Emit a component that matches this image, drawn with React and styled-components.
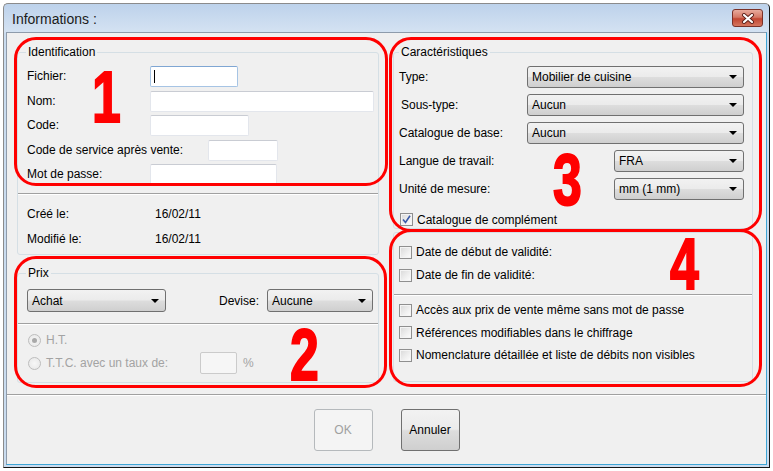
import React from 'react';
import styled, { createGlobalStyle } from 'styled-components';

const GlobalStyle = createGlobalStyle`
  html, body {
    margin: 0;
    padding: 0;
    background: #ffffff;
  }
  body {
    font-family: "Liberation Sans", Arial, sans-serif;
    font-size: 12px;
    color: #000;
  }
`;

const Window = styled.div`
  position: relative;
  box-sizing: border-box;
  width: 767px;
  height: 465px;
  margin: 3px 0 0 3px;
  padding: 0 2px 2px 2px;
  display: flex;
  flex-direction: column;
  border: 1px solid #8b8b8b;
  border-right-color: #151515;
  border-bottom-color: #151515;
  border-radius: 5px 5px 0 0;
  background: linear-gradient(180deg, #bdd2eb 0px, #d4e2f2 28px, #cadcef 29px, #cadcef 100%);
`;

const TitleBar = styled.div`
  height: 28px;
  display: flex;
  align-items: center;
  justify-content: space-between;
  padding: 0 4px 0 6px;
`;

const Title = styled.span`
  font-size: 14px;
  color: #1b1b1b;
  margin-top: 2px;
`;

const CloseButton = styled.div`
  box-sizing: border-box;
  width: 31px;
  height: 18px;
  border: 1px solid #7a3128;
  border-radius: 3px;
  display: flex;
  align-items: center;
  justify-content: center;
  background: linear-gradient(180deg, #e8ab9d 0%, #d57865 45%, #c24632 55%, #d5765f 100%);
`;

const Client = styled.div`
  flex: 1;
  box-sizing: border-box;
  display: flex;
  flex-direction: column;
  background: #f0f0f0;
  border: 1px solid #8e9bab;
  border-right-color: #3ea5d5;
  border-bottom-color: #3ea5d5;
`;

const Main = styled.div`
  display: flex;
  gap: 14px;
  padding: 12px 13px 0 10px;
  align-items: flex-start;
`;

const Column = styled.div`
  display: flex;
  flex-direction: column;
  width: ${p => p.$width}px;
`;

const Group = styled.fieldset`
  margin: ${p => p.$top || 0}px 0 0 0;
  padding: 0 0 ${p => p.$padBottom || 0}px 0;
  min-width: 0;
  border: 1px solid #d5dfe5;
  border-radius: 3px;
`;

const Legend = styled.legend`
  margin-left: ${p => p.$offset}px;
  padding: 0 2px;
  font-size: 12px;
  line-height: 14px;
`;

const Panel = styled.div`
  box-sizing: border-box;
  margin-top: 3px;
  height: 150px;
  padding-top: 7.5px;
  border: 1px solid #d5dfe5;
  border-radius: 3px;
`;

const FieldList = styled.div`
  margin-top: 7px;
  padding-left: 9px;
`;

const FieldRow = styled.div`
  display: flex;
  align-items: flex-start;
  height: 24.5px;
`;

const FieldLabel = styled.span`
  width: ${p => p.$width}px;
  line-height: 21px;
  white-space: nowrap;
`;

const TextBox = styled.div`
  position: relative;
  box-sizing: border-box;
  width: ${p => p.$width}px;
  height: 21px;
  background: #ffffff;
  border: 1px solid ${p => (p.$focused ? '#a6c4e4' : '#e3e6ec')};
  border-top-color: ${p => (p.$focused ? '#7fa6d3' : '#c9ccd3')};
  border-radius: 2px;
`;

const Caret = styled.span`
  position: absolute;
  left: 3px;
  top: 3px;
  width: 1px;
  height: 13px;
  background: #000;
`;

const Separator = styled.div`
  margin-top: ${p => p.$top}px;
  border-top: 1px solid #a0a0a0;
  border-bottom: 1px solid #ffffff;
`;

const DateList = styled.div`
  padding: 6px 0 3px 9px;
`;

const DateRow = styled.div`
  display: flex;
  align-items: center;
  height: 25px;
`;

const DateLabel = styled.span`
  width: 128px;
`;

const PriceRow = styled.div`
  display: flex;
  align-items: center;
  justify-content: space-between;
  margin-top: 9px;
  padding: 0 5px 0 9px;
`;

const Inline = styled.div`
  display: flex;
  align-items: center;
  gap: 8px;
`;

const Combo = styled.div`
  box-sizing: border-box;
  width: ${p => p.$width}px;
  height: ${p => p.$height || 22}px;
  display: flex;
  align-items: center;
  justify-content: space-between;
  padding: 0 6px 0 4px;
  border: 1px solid #707070;
  border-radius: 3px;
  background: linear-gradient(180deg, #f2f2f2 0%, #ebebeb 48%, #dddddd 52%, #cfcfcf 100%);
  white-space: nowrap;
`;

const ComboArrow = styled.span`
  width: 0;
  height: 0;
  border-left: 4px solid transparent;
  border-right: 4px solid transparent;
  border-top: 4px solid #000;
`;

const RadioList = styled.div`
  margin-top: 3.5px;
  padding: 0 0 7.5px 10px;
`;

const RadioRow = styled.div`
  display: flex;
  align-items: center;
  height: 23px;
  color: #a3a3a3;
`;

const Radio = styled.span`
  box-sizing: border-box;
  width: 13px;
  height: 13px;
  border-radius: 50%;
  border: 1px solid #bdbdbd;
  background: radial-gradient(circle, #f7f7f7 0%, #e6e6e6 100%);
  display: flex;
  align-items: center;
  justify-content: center;

  &::after {
    content: '';
    display: ${p => (p.$checked ? 'block' : 'none')};
    width: 5px;
    height: 5px;
    border-radius: 50%;
    background: #a9a9a9;
  }
`;

const RadioText = styled.span`
  margin-left: 5px;
  width: ${p => (p.$width ? `${p.$width}px` : 'auto')};
`;

const RateBox = styled.div`
  box-sizing: border-box;
  width: 37px;
  height: 22px;
  border: 1px solid #cbcbcb;
  border-radius: 2px;
  background: #f6f6f6;
`;

const Percent = styled.span`
  margin-left: 6px;
`;

const CharList = styled.div`
  margin-top: 7px;
  padding-left: 5px;
  display: flex;
  flex-direction: column;
  gap: 6px;
`;

const CharRow = styled.div`
  display: flex;
  align-items: center;
  height: 22px;
`;

const CharLabel = styled.span`
  box-sizing: border-box;
  width: ${p => p.$width}px;
  padding-left: ${p => p.$indent || 0}px;
  white-space: nowrap;
`;

const CheckRow = styled.label`
  display: flex;
  align-items: center;
  gap: 4px;
  height: ${p => p.$height || 13}px;
  margin-top: ${p => p.$top || 0}px;
  padding-left: ${p => p.$left || 0}px;
  white-space: nowrap;
`;

const CheckBox = styled.span`
  box-sizing: border-box;
  flex: none;
  width: 13px;
  height: 13px;
  border: 1px solid #8f8f8f;
  background: linear-gradient(135deg, #d8d8d8 0%, #f0f0f0 60%, #fdfdfd 100%);
  box-shadow: inset 0 0 0 1px #f4f4f4;
  display: flex;
  align-items: center;
  justify-content: center;
`;

const OptionList = styled.div`
  padding-left: 5px;
  margin-top: ${p => p.$top || 0}px;
`;

const Footer = styled.div`
  margin-top: 11px;
  padding-top: 14px;
  display: flex;
  justify-content: center;
  gap: 28px;
  border-top: 1px solid #a0a0a0;
  box-shadow: inset 0 1px 0 #ffffff;
`;

const Button = styled.button`
  box-sizing: border-box;
  width: 59px;
  height: 42px;
  padding: 0;
  font-family: "Liberation Sans", Arial, sans-serif;
  font-size: 12px;
  border-radius: 3px;
  border: 1px solid ${p => (p.disabled ? '#b5b9bc' : '#707070')};
  color: ${p => (p.disabled ? '#a0a0a0' : '#000')};
  background: ${p =>
    p.disabled
      ? '#f4f4f4'
      : 'linear-gradient(180deg, #f2f2f2 0%, #ebebeb 48%, #dddddd 52%, #cfcfcf 100%)'};
`;

const RedFrame = styled.div`
  position: absolute;
  box-sizing: border-box;
  left: ${p => p.$x}px;
  top: ${p => p.$y}px;
  width: ${p => p.$w}px;
  height: ${p => p.$h}px;
  border: 3px solid #ff0000;
  border-radius: 22px;
  pointer-events: none;
`;

const Marker = styled.span`
  position: absolute;
  left: ${p => p.$x}px;
  top: ${p => p.$y}px;
  font-family: "Liberation Sans", Arial, sans-serif;
  font-weight: bold;
  font-size: 72px;
  line-height: 1;
  color: #ff0000;
  transform: scaleX(0.72);
  transform-origin: left top;
  -webkit-text-stroke: 2px #ff0000;
  pointer-events: none;
`;

function CloseGlyph() {
  return (
    <svg width="14" height="11" viewBox="0 0 14 11">
      <path d="M3 2 L11 9 M11 2 L3 9" stroke="#5b1f18" strokeWidth="4" strokeLinecap="round" />
      <path d="M3 2 L11 9 M11 2 L3 9" stroke="#ffffff" strokeWidth="2.2" strokeLinecap="round" />
    </svg>
  );
}

function CheckMark() {
  return (
    <svg width="9" height="9" viewBox="0 0 9 9">
      <path d="M1 4.5 L3.5 7.5 L8 0.8" fill="none" stroke="#3a5aa8" strokeWidth="1.6" />
    </svg>
  );
}

function Select({ width, height, value }) {
  return (
    <Combo $width={width} $height={height}>
      <span>{value}</span>
      <ComboArrow />
    </Combo>
  );
}

function Option({ label, checked }) {
  return (
    <CheckRow $height={22.5}>
      <CheckBox>{checked && <CheckMark />}</CheckBox>
      <span>{label}</span>
    </CheckRow>
  );
}

const identFields = [
  { label: 'Fichier:', labelWidth: 123, width: 88, focused: true },
  { label: 'Nom:', labelWidth: 123, width: 224 },
  { label: 'Code:', labelWidth: 123, width: 99 },
  { label: 'Code de service après vente:', labelWidth: 181, width: 70 },
  { label: 'Mot de passe:', labelWidth: 123, width: 127 },
];

const characteristics = [
  { label: 'Type:', value: 'Mobilier de cuisine', labelWidth: 128, width: 217 },
  { label: 'Sous-type:', value: 'Aucun', labelWidth: 128, width: 217, indent: 2 },
  { label: 'Catalogue de base:', value: 'Aucun', labelWidth: 128, width: 217 },
  { label: 'Langue de travail:', value: 'FRA', labelWidth: 215, width: 130 },
  { label: 'Unité de mesure:', value: 'mm (1 mm)', labelWidth: 215, width: 130 },
];

export default function App() {
  return (
    <>
      <GlobalStyle />
      <Window>
        <TitleBar>
          <Title>Informations :</Title>
          <CloseButton>
            <CloseGlyph />
          </CloseButton>
        </TitleBar>

        <Client>
          <Main>
            <Column $width={362}>
              <Group>
                <Legend $offset={8}>Identification</Legend>
                <FieldList>
                  {identFields.map(f => (
                    <FieldRow key={f.label}>
                      <FieldLabel $width={f.labelWidth}>{f.label}</FieldLabel>
                      <TextBox $width={f.width} $focused={f.focused}>
                        {f.focused && <Caret />}
                      </TextBox>
                    </FieldRow>
                  ))}
                </FieldList>
                <Separator $top={4.5} />
                <DateList>
                  <DateRow>
                    <DateLabel>Créé le:</DateLabel>
                    <span>16/02/11</span>
                  </DateRow>
                  <DateRow>
                    <DateLabel>Modifié le:</DateLabel>
                    <span>16/02/11</span>
                  </DateRow>
                </DateList>
              </Group>

              <Group $top={11}>
                <Legend $offset={8}>Prix</Legend>
                <PriceRow>
                  <Select width={139} height={23} value="Achat" />
                  <Inline>
                    <span>Devise:</span>
                    <Select width={106} height={23} value="Aucune" />
                  </Inline>
                </PriceRow>
                <Separator $top={11} />
                <RadioList>
                  <RadioRow>
                    <Radio $checked />
                    <RadioText>H.T.</RadioText>
                  </RadioRow>
                  <RadioRow>
                    <Radio />
                    <RadioText $width={154}>T.T.C. avec un taux de:</RadioText>
                    <RateBox />
                    <Percent>%</Percent>
                  </RadioRow>
                </RadioList>
              </Group>
            </Column>

            <Column $width={360}>
              <Group $padBottom={2}>
                <Legend $offset={5}>Caractéristiques</Legend>
                <CharList>
                  {characteristics.map(c => (
                    <CharRow key={c.label}>
                      <CharLabel $width={c.labelWidth} $indent={c.indent}>{c.label}</CharLabel>
                      <Select width={c.width} value={c.value} />
                    </CharRow>
                  ))}
                </CharList>
                <CheckRow $top={13} $left={6}>
                  <CheckBox>
                    <CheckMark />
                  </CheckBox>
                  <span>Catalogue de complément</span>
                </CheckRow>
              </Group>

              <Panel>
                <OptionList>
                  <CheckRow $height={23}>
                    <CheckBox />
                    <span>Date de début de validité:</span>
                  </CheckRow>
                  <CheckRow $height={23}>
                    <CheckBox />
                    <span>Date de fin de validité:</span>
                  </CheckRow>
                </OptionList>
                <Separator $top={7.5} />
                <OptionList $top={2.75}>
                  <Option label="Accès aux prix de vente même sans mot de passe" />
                  <Option label="Références modifiables dans le chiffrage" />
                  <Option label="Nomenclature détaillée et liste de débits non visibles" />
                </OptionList>
              </Panel>
            </Column>
          </Main>

          <Footer>
            <Button disabled>OK</Button>
            <Button>Annuler</Button>
          </Footer>
        </Client>

        <RedFrame $x={10} $y={33} $w={374} $h={149} />
        <RedFrame $x={10} $y={252} $w={373} $h={132} />
        <RedFrame $x={385} $y={33} $w={373} $h={195} />
        <RedFrame $x={385} $y={225} $w={373} $h={158} />
        <Marker $x={88} $y={57}>1</Marker>
        <Marker $x={286} $y={315}>2</Marker>
        <Marker $x={549} $y={140}>3</Marker>
        <Marker $x={666} $y={224}>4</Marker>
      </Window>
    </>
  );
}
